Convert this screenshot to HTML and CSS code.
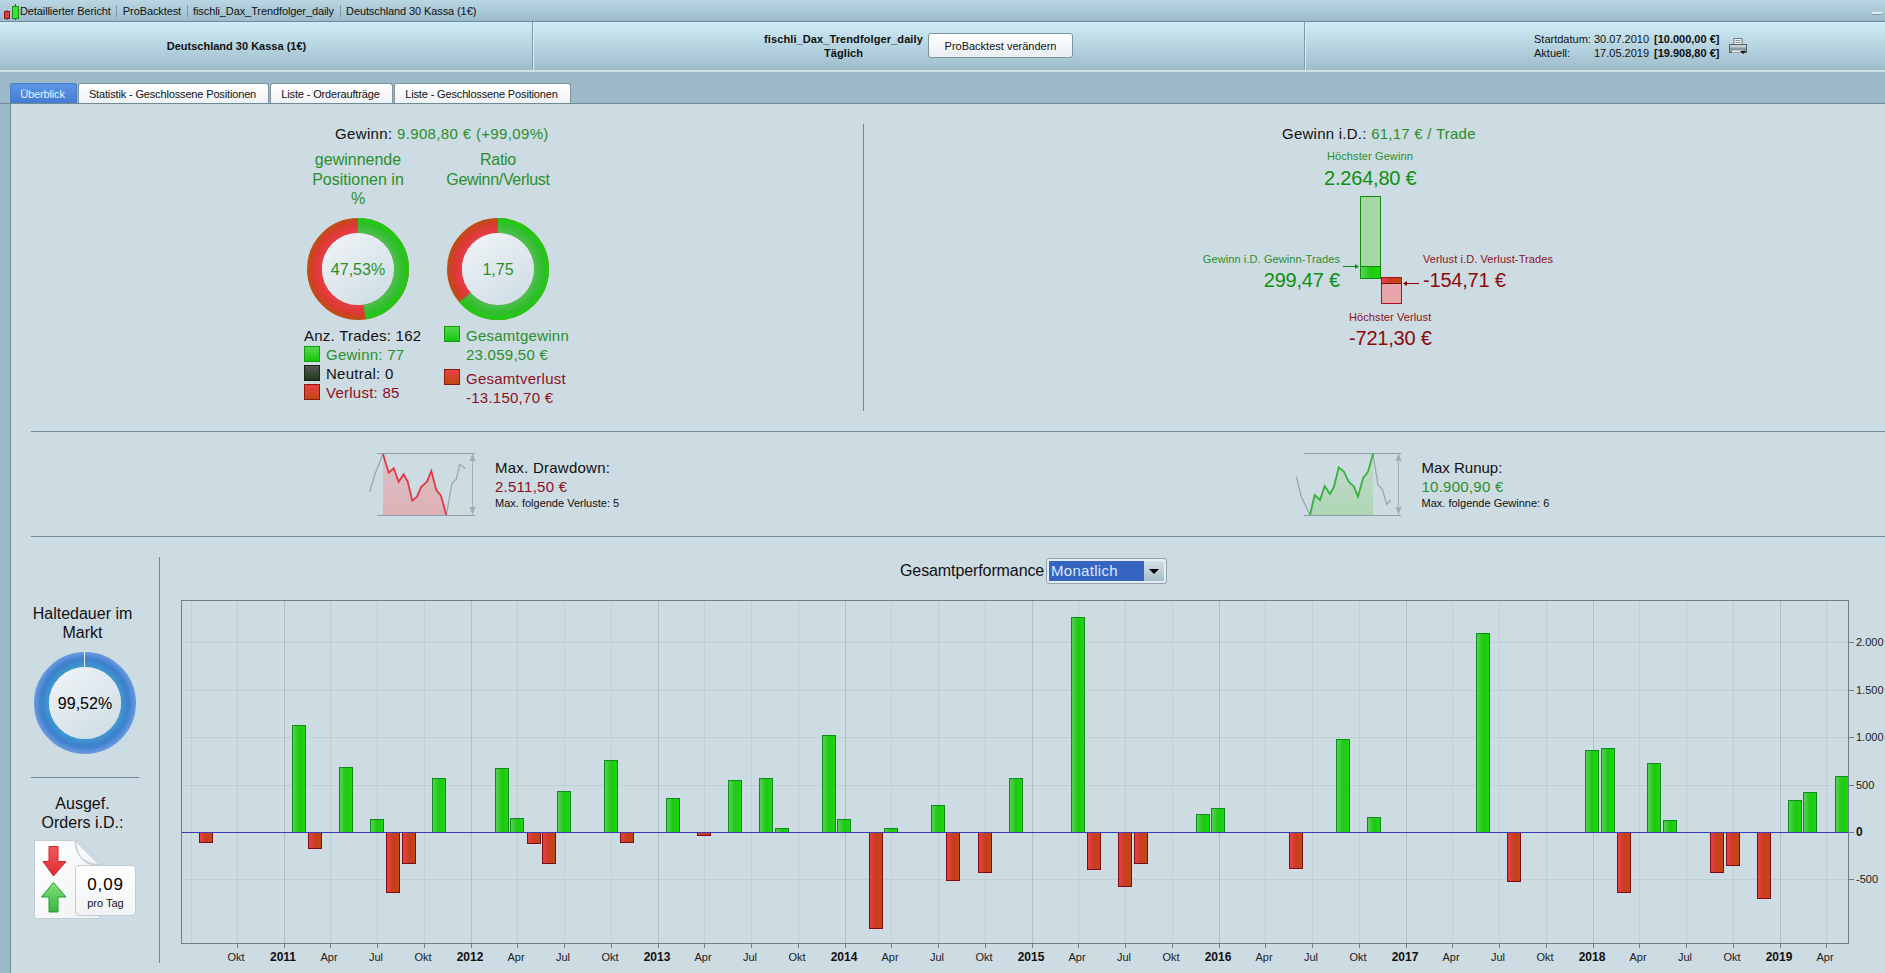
FILE: index.html
```html
<!DOCTYPE html>
<html lang="de">
<head>
<meta charset="utf-8">
<title>Detaillierter Bericht</title>
<link rel="stylesheet" href="styles.css">
</head>
<body>
<svg class="defs" width="0" height="0" aria-hidden="true">
  <defs>
    <radialGradient id="ringGreen" gradientUnits="userSpaceOnUse" cx="51" cy="51" r="51">
      <stop offset="0.7" stop-color="#4fc04f"/><stop offset="0.88" stop-color="#30bd2c"/><stop offset="1" stop-color="#1dcc0c"/>
    </radialGradient>
    <radialGradient id="ringRed" gradientUnits="userSpaceOnUse" cx="51" cy="51" r="51">
      <stop offset="0.7" stop-color="#ea3c48"/><stop offset="0.88" stop-color="#d83a30"/><stop offset="1" stop-color="#bd5010"/>
    </radialGradient>
    <radialGradient id="ringBlue" gradientUnits="userSpaceOnUse" cx="51" cy="51" r="51">
      <stop offset="0.7" stop-color="#3f9ad0"/><stop offset="0.86" stop-color="#3d7fcc"/><stop offset="1" stop-color="#6a9be0"/>
    </radialGradient>
    <linearGradient id="face" x1="0.1" y1="0" x2="0.8" y2="1">
      <stop offset="0" stop-color="#f0f4f7"/><stop offset="1" stop-color="#cfdde5"/>
    </linearGradient>
    <linearGradient id="barG" x1="0" y1="0" x2="1" y2="0">
      <stop offset="0" stop-color="#5ad258"/><stop offset="0.5" stop-color="#1ec814"/><stop offset="1" stop-color="#1dd80c"/>
    </linearGradient>
    <linearGradient id="barR" x1="0" y1="0" x2="1" y2="0">
      <stop offset="0" stop-color="#ec4048"/><stop offset="0.5" stop-color="#c83c20"/><stop offset="1" stop-color="#c04a10"/>
    </linearGradient>
    <linearGradient id="ddFill" x1="0" y1="0" x2="0" y2="1">
      <stop offset="0" stop-color="#d8c4cb"/><stop offset="1" stop-color="#ddb0b5"/>
    </linearGradient>
    <linearGradient id="ruFill" x1="0" y1="0" x2="0" y2="1">
      <stop offset="0" stop-color="#c4d8cf"/><stop offset="1" stop-color="#aed6b4"/>
    </linearGradient>
    <linearGradient id="docFill" x1="0" y1="0" x2="1" y2="1">
      <stop offset="0" stop-color="#ffffff"/><stop offset="1" stop-color="#eef1f3"/>
    </linearGradient>
    <linearGradient id="arrR" x1="0" y1="0" x2="0" y2="1">
      <stop offset="0" stop-color="#f25a5a"/><stop offset="1" stop-color="#e02a30"/>
    </linearGradient>
    <linearGradient id="arrG" x1="0" y1="0" x2="0" y2="1">
      <stop offset="0" stop-color="#7fe27a"/><stop offset="1" stop-color="#38b640"/>
    </linearGradient>
  </defs>
</svg>

<div class="titlebar">
  <svg class="app-icon" viewBox="0 0 18 18" width="18" height="18">
    <path d="M5 8v10M13.500 2v17" stroke="#444" fill="none"/>
    <rect x="2.500" y="9.500" width="5" height="7" fill="#e23a3a" stroke="#8a1a1a"/>
    <rect x="10.500" y="4.500" width="6" height="12" fill="#3fe03a" stroke="#178a17"/>
  </svg>
  <span class="crumb">Detaillierter Bericht</span>
  <span class="crumb">ProBacktest</span>
  <span class="crumb">fischli_Dax_Trendfolger_daily</span>
  <span class="crumb crumb-last">Deutschland 30 Kassa (1€)</span>
  <div class="minimize"></div>
</div>

<header class="header">
  <div class="hcol hcol-a"><b>Deutschland 30 Kassa (1€)</b></div>
  <div class="hcol hcol-b">
    <div class="strategy"><b>fischli_Dax_Trendfolger_daily</b><b>Täglich</b></div>
    <button class="btn">ProBacktest verändern</button>
  </div>
  <div class="hcol hcol-c">
    <div class="dates">
      <span>Startdatum:</span><span>30.07.2010</span><b>[10.000,00 €]</b>
      <span>Aktuell:</span><span>17.05.2019</span><b>[19.908,80 €]</b>
    </div>
    <svg class="printer" viewBox="0 0 18 17" width="18" height="17">
      <rect x="5" y="0.500" width="8" height="6" fill="#f4f6f7" stroke="#6f7c84"/>
      <path d="M6.500 2.500h5M6.500 4.500h5" stroke="#8a969c"/>
      <rect x="0.500" y="6.500" width="17" height="8" fill="#8d9aa1" stroke="#56626a"/>
      <rect x="1" y="7" width="16" height="2.500" fill="#c4ced3"/>
      <rect x="3" y="12.500" width="11" height="2" fill="#e8edf0"/>
      <path d="M11 13h6l-3 3z" fill="#111"/>
    </svg>
  </div>
</header>

<nav class="tabs">
  <span class="tab tab-active tab-1">Überblick</span>
  <span class="tab tab-2">Statistik - Geschlossene Positionen</span>
  <span class="tab tab-3">Liste - Orderaufträge</span>
  <span class="tab tab-4">Liste - Geschlossene Positionen</span>
</nav>

<main class="panel">
  <section class="top">
    <div class="summary">
      <div class="line heading-left">Gewinn: <span class="g">9.908,80 € (+99,09%)</span></div>
      <div class="cols">
        <div class="col">
          <div class="col-title g">gewinnende Positionen in %</div>
          <svg class="donut" viewBox="0 0 102 102" width="102" height="102">
            <circle cx="51" cy="51" r="43.500" fill="none" stroke="url(#ringRed)" stroke-width="15"/>
            <circle cx="51" cy="51" r="43.500" fill="none" stroke="url(#ringGreen)" stroke-width="15" stroke-dasharray="129.900 273.300" transform="rotate(-90 51 51)"/>
            <circle cx="51" cy="51" r="36" fill="url(#face)"/>
            <text class="donut-text g-fill" x="51" y="56.500" text-anchor="middle">47,53%</text>
          </svg>
          <div class="legend">
            <div class="line">Anz. Trades: 162</div>
            <div class="line item g"><i class="sw sw-g"></i>Gewinn: 77</div>
            <div class="line item"><i class="sw sw-n"></i>Neutral: 0</div>
            <div class="line item r"><i class="sw sw-r"></i>Verlust: 85</div>
          </div>
        </div>
        <div class="col">
          <div class="col-title col-title-tight g">Ratio Gewinn/Verlust</div>
          <svg class="donut" viewBox="0 0 102 102" width="102" height="102">
            <circle cx="51" cy="51" r="43.500" fill="none" stroke="url(#ringRed)" stroke-width="15"/>
            <circle cx="51" cy="51" r="43.500" fill="none" stroke="url(#ringGreen)" stroke-width="15" stroke-dasharray="173.900 273.300" transform="rotate(-90 51 51)"/>
            <circle cx="51" cy="51" r="36" fill="url(#face)"/>
            <text class="donut-text g-fill" x="51" y="56.500" text-anchor="middle">1,75</text>
          </svg>
          <div class="legend legend-b">
            <div class="item2 g"><i class="sw sw-g"></i><div><div class="line">Gesamtgewinn</div><div class="line">23.059,50 €</div></div></div>
            <div class="item2 r"><i class="sw sw-r"></i><div><div class="line">Gesamtverlust</div><div class="line">-13.150,70 €</div></div></div>
          </div>
        </div>
      </div>
    </div>

    <div class="avg">
      <div class="line avg-head">Gewinn i.D.: <span class="g">61,17 € / Trade</span></div>
      <div class="small g high-label">Höchster Gewinn</div>
      <div class="big dg high-value">2.264,80 €</div>
      <div class="avg-row">
        <div class="avg-left">
          <div class="small g">Gewinn i.D. Gewinn-Trades</div>
          <div class="big dg">299,47 €</div>
        </div>
        <svg class="avg-bars" viewBox="1343 196 78 108" width="78" height="108">
          <rect x="1360.500" y="196.500" width="20" height="82" fill="#a3d8a4" stroke="#0f8a0f"/>
          <rect x="1361" y="266.500" width="19" height="11.500" fill="url(#barG)"/>
          <path d="M1360 266.500h21" stroke="#0f8a0f" fill="none"/>
          <rect x="1381.500" y="277.500" width="20" height="26" fill="#e8a6ab" stroke="#a5161c"/>
          <rect x="1382" y="278" width="19" height="5.500" fill="url(#barR)"/>
          <path d="M1381 283.500h21" stroke="#7a0d12" fill="none"/>
          <path d="M1343 266.500h15" stroke="#0f8a0f" fill="none"/>
          <path d="M1359 266.500l-4-2.500v5z" fill="#0f8a0f"/>
          <path d="M1419 283.500h-15" stroke="#8a0a0a" fill="none"/>
          <path d="M1403 283.500l4-2.500v5z" fill="#8a0a0a"/>
        </svg>
        <div class="avg-right">
          <div class="small r">Verlust i.D. Verlust-Trades</div>
          <div class="big dr">-154,71 €</div>
        </div>
      </div>
      <div class="small r low-label">Höchster Verlust</div>
      <div class="big dr low-value">-721,30 €</div>
    </div>
  </section>

  <section class="extremes">
    <div class="extreme">
      <svg class="mini" viewBox="0 0 115 70" width="115" height="70">
        <path d="M10 3.500h98M10 65.500h98" stroke="#8d9ca5" fill="none"/>
        <path d="M105.500 8v53" stroke="#a0aeb5" fill="none"/>
        <path d="M105.500 3l-3 8h6zM105.500 65l-3-8h6z" fill="#a0aeb5"/>
        <path d="M16 4L21.700 22.700 26.700 18.300 31.700 31.700 36.700 24.300 40.700 31.700 45.300 50.700 50 46.700 54.300 36.700 60 31.700 64.300 21 69.300 40 74 45.700 79.300 65H16z" fill="url(#ddFill)"/>
        <path d="M2.700 41.700L8.300 23.300 16 4M79.300 65L85 33.300 89.300 29.300 92.700 14.300 98.300 18.700" stroke="#98a4ac" stroke-width="1.200" fill="none"/>
        <path d="M16 4L21.700 22.700 26.700 18.300 31.700 31.700 36.700 24.300 40.700 31.700 45.300 50.700 50 46.700 54.300 36.700 60 31.700 64.300 21 69.300 40 74 45.700 79.300 65" stroke="#e2383f" stroke-width="1.800" fill="none"/>
      </svg>
      <div class="extreme-text">
        <div class="line spaced">Max. Drawdown:</div>
        <div class="line spaced r">2.511,50 €</div>
        <div class="note">Max. folgende Verluste: 5</div>
      </div>
    </div>
    <div class="extreme">
      <svg class="mini" viewBox="0 0 115 70" width="115" height="70">
        <path d="M10 3.500h97M10 65.500h97" stroke="#8d9ca5" fill="none"/>
        <path d="M104.500 8v53" stroke="#a0aeb5" fill="none"/>
        <path d="M104.500 3l-3 8h6zM104.500 65l-3-8h6z" fill="#a0aeb5"/>
        <path d="M16 65L20.700 45 26 50 30.700 36 36 44 40 36.700 44.700 17.300 50 21.700 54.700 31.700 60 36.700 64 46.700 69 28.300 74 21.700 79 4V65z" fill="url(#ruFill)"/>
        <path d="M2.300 26.700L7.300 46.700 16 65M79 4L84 35 88.300 39.300 92.700 54.300 96.700 50" stroke="#98a4ac" stroke-width="1.200" fill="none"/>
        <path d="M16 65L20.700 45 26 50 30.700 36 36 44 40 36.700 44.700 17.300 50 21.700 54.700 31.700 60 36.700 64 46.700 69 28.300 74 21.700 79 4" stroke="#33b23a" stroke-width="1.800" fill="none"/>
      </svg>
      <div class="extreme-text">
        <div class="line">Max Runup:</div>
        <div class="line spaced g">10.900,90 €</div>
        <div class="note">Max. folgende Gewinne: 6</div>
      </div>
    </div>
  </section>

  <section class="bottom">
    <aside class="side">
      <div class="side-title">Haltedauer im Markt</div>
      <svg class="donut donut-blue" viewBox="0 0 102 102" width="102" height="102">
        <circle cx="51" cy="51" r="43.500" fill="none" stroke="url(#ringBlue)" stroke-width="15"/>
        <path d="M50.500 0v15" stroke="#e6eef4" fill="none"/>
        <circle cx="51" cy="51" r="36" fill="url(#face)"/>
        <text class="donut-text" x="51" y="56.500" text-anchor="middle">99,52%</text>
      </svg>
      <div class="side-rule"></div>
      <div class="side-title side-title-b">Ausgef. Orders i.D.:</div>
      <div class="orders">
        <svg class="doc" viewBox="0 0 66 79" width="66" height="79">
          <path d="M0.500 0.500H41L65.500 25V78.500H0.500z" fill="url(#docFill)" stroke="#c2ccd2"/>
          <path d="M41 0.500C42 12 45 22 65.500 25C55 25 45 24 41 0.500z" fill="#dfe5e9" stroke="#c2ccd2"/>
          <path d="M15 6.500h9v15h8l-12.500 14.500L9 21.500h6z" fill="url(#arrR)" stroke="#c8262c"/>
          <path d="M19.500 42.500L32 57h-8v15h-9V57H7.500z" fill="url(#arrG)" stroke="#2a9a35"/>
        </svg>
        <div class="badge"><strong>0,09</strong><span>pro Tag</span></div>
      </div>
    </aside>

    <div class="perf">
      <div class="perf-head">
        <span class="perf-label">Gesamtperformance</span>
        <div class="select"><span class="select-value">Monatlich</span><span class="select-arrow"></span></div>
      </div>
      <svg class="chart" viewBox="181 600 1704 373" width="1704" height="373">
        <path class="grid" d="M182 642.500H1849M182 690.500H1849M182 737.500H1849M182 785.500H1849M182 879.500H1849"/>
        <path class="grid" d="M191.500 600V944M237.500 600V944M330.500 600V944M377.500 600V944M424.500 600V944M517.500 600V944M564.500 600V944M611.500 600V944M704.500 600V944M751.500 600V944M798.500 600V944M891.500 600V944M938.500 600V944M985.500 600V944M1078.500 600V944M1125.500 600V944M1172.500 600V944M1265.500 600V944M1312.500 600V944M1359.500 600V944M1452.500 600V944M1499.500 600V944M1546.500 600V944M1639.500 600V944M1686.500 600V944M1733.500 600V944M1826.500 600V944"/>
        <path class="grid-year" d="M284.500 600V944M471.500 600V944M658.500 600V944M845.500 600V944M1032.500 600V944M1219.500 600V944M1406.500 600V944M1593.500 600V944M1780.500 600V944"/>

        <g class="bars-g">
          <rect x="292.500" y="725.500" width="13" height="107"/>
          <rect x="339.500" y="767.500" width="13" height="65"/>
          <rect x="370.500" y="819.500" width="13" height="13"/>
          <rect x="432.500" y="778.500" width="13" height="54"/>
          <rect x="495.500" y="768.500" width="13" height="64"/>
          <rect x="510.500" y="818.500" width="13" height="14"/>
          <rect x="557.500" y="791.500" width="13" height="41"/>
          <rect x="604.500" y="760.500" width="13" height="72"/>
          <rect x="666.500" y="798.500" width="13" height="34"/>
          <rect x="728.500" y="780.500" width="13" height="52"/>
          <rect x="759.500" y="778.500" width="13" height="54"/>
          <rect x="775.500" y="828.500" width="13" height="4"/>
          <rect x="822.500" y="735.500" width="13" height="97"/>
          <rect x="837.500" y="819.500" width="13" height="13"/>
          <rect x="884.500" y="828.500" width="13" height="4"/>
          <rect x="931.500" y="805.500" width="13" height="27"/>
          <rect x="1009.500" y="778.500" width="13" height="54"/>
          <rect x="1071.500" y="617.500" width="13" height="215"/>
          <rect x="1196.500" y="814.500" width="13" height="18"/>
          <rect x="1211.500" y="808.500" width="13" height="24"/>
          <rect x="1336.500" y="739.500" width="13" height="93"/>
          <rect x="1367.500" y="817.500" width="13" height="15"/>
          <rect x="1476.500" y="633.500" width="13" height="199"/>
          <rect x="1585.500" y="750.500" width="13" height="82"/>
          <rect x="1601.500" y="748.500" width="13" height="84"/>
          <rect x="1647.500" y="763.500" width="13" height="69"/>
          <rect x="1663.500" y="820.500" width="13" height="12"/>
          <rect x="1788.500" y="800.500" width="13" height="32"/>
          <rect x="1803.500" y="792.500" width="13" height="40"/>
          <rect x="1835.500" y="776.500" width="13" height="56"/>
        </g>
        <g class="bars-r">
          <rect x="199.500" y="832.500" width="13" height="10"/>
          <rect x="308.500" y="832.500" width="13" height="16"/>
          <rect x="386.500" y="832.500" width="13" height="60"/>
          <rect x="402.500" y="832.500" width="13" height="31"/>
          <rect x="527.500" y="832.500" width="13" height="11"/>
          <rect x="542.500" y="832.500" width="13" height="31"/>
          <rect x="620.500" y="832.500" width="13" height="10"/>
          <rect x="697.500" y="832.500" width="13" height="3"/>
          <rect x="869.500" y="832.500" width="13" height="96"/>
          <rect x="946.500" y="832.500" width="13" height="48"/>
          <rect x="978.500" y="832.500" width="13" height="40"/>
          <rect x="1087.500" y="832.500" width="13" height="37"/>
          <rect x="1118.500" y="832.500" width="13" height="54"/>
          <rect x="1134.500" y="832.500" width="13" height="31"/>
          <rect x="1289.500" y="832.500" width="13" height="36"/>
          <rect x="1507.500" y="832.500" width="13" height="49"/>
          <rect x="1617.500" y="832.500" width="13" height="60"/>
          <rect x="1710.500" y="832.500" width="13" height="40"/>
          <rect x="1726.500" y="832.500" width="13" height="33"/>
          <rect x="1757.500" y="832.500" width="13" height="66"/>
        </g>
        <path class="zero" d="M182 832.500H1849"/>
        <rect class="frame" x="181.500" y="600.500" width="1667" height="343"/>
        <path class="frame-line" d="M1849 642.500h5M1849 690.500h5M1849 737.500h5M1849 785.500h5M1849 832.500h5M1849 879.500h5"/>
        <path class="frame-line" d="M237.500 944v4M284.500 944v4M330.500 944v4M377.500 944v4M424.500 944v4M471.500 944v4M517.500 944v4M564.500 944v4M611.500 944v4M658.500 944v4M704.500 944v4M751.500 944v4M798.500 944v4M845.500 944v4M891.500 944v4M938.500 944v4M985.500 944v4M1032.500 944v4M1078.500 944v4M1125.500 944v4M1172.500 944v4M1219.500 944v4M1265.500 944v4M1312.500 944v4M1359.500 944v4M1406.500 944v4M1452.500 944v4M1499.500 944v4M1546.500 944v4M1593.500 944v4M1639.500 944v4M1686.500 944v4M1733.500 944v4M1780.500 944v4M1826.500 944v4"/>
        <g class="ylabels">
          <text x="1856" y="646">2.000</text>
          <text x="1856" y="694">1.500</text>
          <text x="1856" y="741">1.000</text>
          <text x="1856" y="789">500</text>
          <text class="strong" x="1856" y="836">0</text>
          <text x="1856" y="883">-500</text>
        </g>
        <g class="xlabels">
          <text x="236" y="961">Okt</text>
          <text class="strong" x="283" y="961">2011</text>
          <text x="329" y="961">Apr</text>
          <text x="376" y="961">Jul</text>
          <text x="423" y="961">Okt</text>
          <text class="strong" x="470" y="961">2012</text>
          <text x="516" y="961">Apr</text>
          <text x="563" y="961">Jul</text>
          <text x="610" y="961">Okt</text>
          <text class="strong" x="657" y="961">2013</text>
          <text x="703" y="961">Apr</text>
          <text x="750" y="961">Jul</text>
          <text x="797" y="961">Okt</text>
          <text class="strong" x="844" y="961">2014</text>
          <text x="890" y="961">Apr</text>
          <text x="937" y="961">Jul</text>
          <text x="984" y="961">Okt</text>
          <text class="strong" x="1031" y="961">2015</text>
          <text x="1077" y="961">Apr</text>
          <text x="1124" y="961">Jul</text>
          <text x="1171" y="961">Okt</text>
          <text class="strong" x="1218" y="961">2016</text>
          <text x="1264" y="961">Apr</text>
          <text x="1311" y="961">Jul</text>
          <text x="1358" y="961">Okt</text>
          <text class="strong" x="1405" y="961">2017</text>
          <text x="1451" y="961">Apr</text>
          <text x="1498" y="961">Jul</text>
          <text x="1545" y="961">Okt</text>
          <text class="strong" x="1592" y="961">2018</text>
          <text x="1638" y="961">Apr</text>
          <text x="1685" y="961">Jul</text>
          <text x="1732" y="961">Okt</text>
          <text class="strong" x="1779" y="961">2019</text>
          <text x="1825" y="961">Apr</text>
        </g>
      </svg>
    </div>
  </section>
</main>
</body>
</html>
```
FILE: styles.css
```css
* { box-sizing: border-box; }
html, body { margin: 0; padding: 0; }
body {
  width: 1885px;
  height: 973px;
  overflow: hidden;
  background: #9bb9c8;
  color: #111;
  font-family: "Liberation Sans", Arial, sans-serif;
  font-size: 11px;
}
.defs { position: absolute; }

/* Title bar */
.titlebar {
  height: 22px;
  display: flex;
  align-items: center;
  padding-left: 2px;
  border-bottom: 1px solid #6d8a98;
  background: linear-gradient(#b9d6e3, #9dbccb);
  position: relative;
}
.app-icon { flex: none; }
.crumb { padding: 0 5.500px; border-right: 1px solid #7f98a4; line-height: 12px; letter-spacing: -0.1px; white-space: nowrap; }
.crumb:first-of-type { padding-left: 0; }
.crumb-last { border-right: 0; }
.minimize {
  position: absolute;
  right: 3px;
  top: 12px;
  width: 10px;
  height: 2px;
  background: #e4edf1;
  box-shadow: 0 1px 0 #7f98a4;
}

/* Header */
.header {
  height: 50px;
  display: flex;
  padding-left: 2px;
  border-bottom: 2px solid #cfe0e8;
  background: linear-gradient(#cfecf8, #9fbccb);
}
.hcol { display: flex; align-items: center; }
.hcol-a { width: 532px; justify-content: center; padding-right: 62px; border-right: 1px solid #e2eef3; box-shadow: inset -1px 0 0 #7f98a4; }
.hcol-b { width: 772px; padding-left: 228px; border-right: 1px solid #e2eef3; box-shadow: inset -1px 0 0 #7f98a4; padding-bottom: 1px; }
.hcol-c { flex: 1; padding-left: 228px; padding-bottom: 1px; }
.strategy { width: 163px; display: flex; flex-direction: column; align-items: center; line-height: 14px; letter-spacing: 0.1px; }
.btn {
  width: 145px;
  height: 25px;
  margin-left: 3px;
  padding: 0;
  border: 1px solid #7d949f;
  border-radius: 3px;
  background: linear-gradient(#ffffff, #e8eef1);
  color: #111;
  font: 11px "Liberation Sans", Arial, sans-serif;
}
.dates { display: grid; grid-template-columns: 60px 60px auto; line-height: 14px; }
.printer { margin: 2px 0 0 10px; flex: none; }

/* Tabs */
.tabs {
  height: 32px;
  display: flex;
  align-items: flex-end;
  padding-left: 10px;
  gap: 1px;
  background: #9bb9c8;
  border-bottom: 1px solid #6f8a97;
}
.tab {
  height: 20px;
  display: flex;
  align-items: center;
  justify-content: center;
  padding-right: 2px;
  border: 1px solid #7f949f;
  border-bottom: 0;
  border-radius: 3px 3px 0 0;
  background: linear-gradient(#ffffff, #eef2f4);
  letter-spacing: -0.15px;
}
.tab-1 { width: 67px; }
.tab-2 { width: 191px; }
.tab-3 { width: 123px; }
.tab-4 { width: 177px; }
.tab-active {
  background: linear-gradient(#5c95e6, #447cd0);
  border-color: #4a7cc8;
  color: #e6f0ff;
}

/* Panel */
.panel {
  margin-left: 10px;
  height: 869px;
  background: #cddbe3;
  border-left: 1px solid #6f8a97;
}
.g { color: #2a8f2a; }
.r { color: #8c1020; }
.dg { color: #0f8f0f; }
.dr { color: #8a0a0a; }
.g-fill { fill: #2a8f2a; }
.line { font-size: 15px; line-height: 19px; }
.spaced { letter-spacing: 0.25px; }

.top { height: 327px; display: flex; padding-top: 20px; }
.summary {
  width: 853px;
  height: 287px;
  padding-left: 292px;
  border-right: 1px solid #6f8a97;
}
.heading-left { margin-left: 32px; letter-spacing: 0.35px; }
.cols { display: flex; gap: 30px; margin-top: 7px; }
.col { width: 110px; }
.col-title {
  height: 58.500px;
  width: 106px;
  margin-left: 2px;
  font-size: 16px;
  line-height: 19.500px;
  text-align: center;
}
.col-title-tight { letter-spacing: -0.3px; }
.donut { display: block; margin: 9px auto 0; }
.donut-text { font-size: 16px; }
.legend { margin-top: 6px; padding-left: 1px; white-space: nowrap; letter-spacing: 0.25px; }
.item { display: flex; align-items: center; }
.sw {
  display: block;
  flex: none;
  width: 16px;
  height: 16px;
  margin-right: 6px;
  border: 1px solid;
}
.sw-g { background: linear-gradient(#55d850, #14c808); border-color: #119a11; }
.sw-n { background: linear-gradient(#555, #1c3a18); border-color: #222; }
.sw-r { background: linear-gradient(#ec4048, #c04a10); border-color: #8a1a10; }
.item2 { display: flex; align-items: flex-start; padding-bottom: 5px; }

.avg { flex: 1; }
.avg-head { margin-left: 418px; letter-spacing: 0.25px; }
.small { font-size: 11px; line-height: 15px; letter-spacing: 0.1px; }
.big { font-size: 20px; line-height: 24px; letter-spacing: -0.2px; }
.high-label { margin: 6px 0 0 463px; }
.high-value { margin: 2px 0 0 460px; }
.avg-row { display: flex; margin-top: 6px; height: 108px; }
.avg-left { width: 476px; padding-top: 56px; text-align: right; }
.avg-left .big, .avg-right .big { margin-top: 1px; }
.avg-bars { display: block; margin-left: 3px; flex: none; }
.avg-right { margin-left: 2px; padding-top: 56px; white-space: nowrap; }
.low-label { margin: 6px 0 0 485px; }
.low-value { margin: 1px 0 0 485px; }

.extremes {
  height: 105px;
  display: grid;
  grid-template-columns: 926.500px 1fr;
  padding: 19px 0 0 356px;
  position: relative;
}
.extremes::before,
.extremes::after {
  content: "";
  position: absolute;
  left: 20px;
  right: 0;
  height: 1px;
  background: #6f8a97;
  top: 0;
}
.extremes::after { top: auto; bottom: -1px; }
.extreme { display: flex; }
.mini { flex: none; display: block; }
.extreme-text { margin: 8px 0 0 13px; white-space: nowrap; }
.note { font-size: 11px; line-height: 14px; }

/* Bottom */
.bottom { display: flex; padding-top: 21px; }
.side {
  width: 149px;
  height: 406px;
  padding: 47px 5px 0 0;
  border-right: 1px solid #6f8a97;
}
.side-title { font-size: 16px; line-height: 19px; text-align: center; padding: 0 12px; }
.side-title-b { margin-top: 16px; padding: 0 30px; }
.donut-blue { margin: 10px 0 0 23px; }
.side-rule { height: 1px; margin: 23px 0 0 20px; width: 108px; background: #6f8a97; }
.orders { position: relative; margin: 8px 0 0 23px; height: 80px; }
.doc { display: block; }
.badge {
  position: absolute;
  left: 41px;
  top: 25px;
  width: 61px;
  height: 51px;
  display: flex;
  flex-direction: column;
  align-items: center;
  padding-top: 9px;
  border: 1px solid #c2ccd2;
  border-radius: 4px;
  background: linear-gradient(#ffffff, #f0f3f5);
}
.badge strong { font-size: 17px; font-weight: 400; line-height: 20px; letter-spacing: 0.9px; color: #000; }
.badge span { font-size: 11px; line-height: 15px; margin-top: 1px; }

.perf { flex: 1; }
.perf-head { height: 26px; margin-top: 1px; display: flex; align-items: center; padding-left: 740px; }
.perf-label { font-size: 16px; width: 146px; white-space: nowrap; letter-spacing: -0.1px; }
.select {
  width: 121px;
  height: 26px;
  display: flex;
  padding: 2px;
  border: 1px solid #8fa3ad;
  border-radius: 3px;
  background: #e6eef2;
}
.select-value {
  width: 95px;
  padding-left: 2px;
  font-size: 15px;
  line-height: 20px;
  background: #3565c0;
  color: #dce8ff;
  letter-spacing: 0.3px;
}
.select-arrow {
  flex: 1;
  background: linear-gradient(#d3e0e6, #a6bec9);
  position: relative;
}
.select-arrow::after {
  content: "";
  position: absolute;
  left: 5px;
  top: 8px;
  border: 5.500px solid transparent;
  border-top: 5px solid #000;
  border-bottom: 0;
}
.chart { display: block; margin: 16px 0 0 21px; }
.grid { fill: none; stroke: #c0ced6; }
.grid-year { fill: none; stroke: #b2c0c8; }
.bars-g rect { fill: url(#barG); stroke: #0f8a1f; }
.bars-r rect { fill: url(#barR); stroke: #7a0d12; }
.zero { fill: none; stroke: #3b3bb8; }
.frame { fill: none; stroke: #6d8088; }
.frame-line { fill: none; stroke: #6d8088; }
.ylabels text { font-size: 11px; fill: #222; }
.xlabels text { font-size: 11px; fill: #222; text-anchor: middle; }
.chart .strong { font-size: 12px; font-weight: 700; fill: #111; }
```
